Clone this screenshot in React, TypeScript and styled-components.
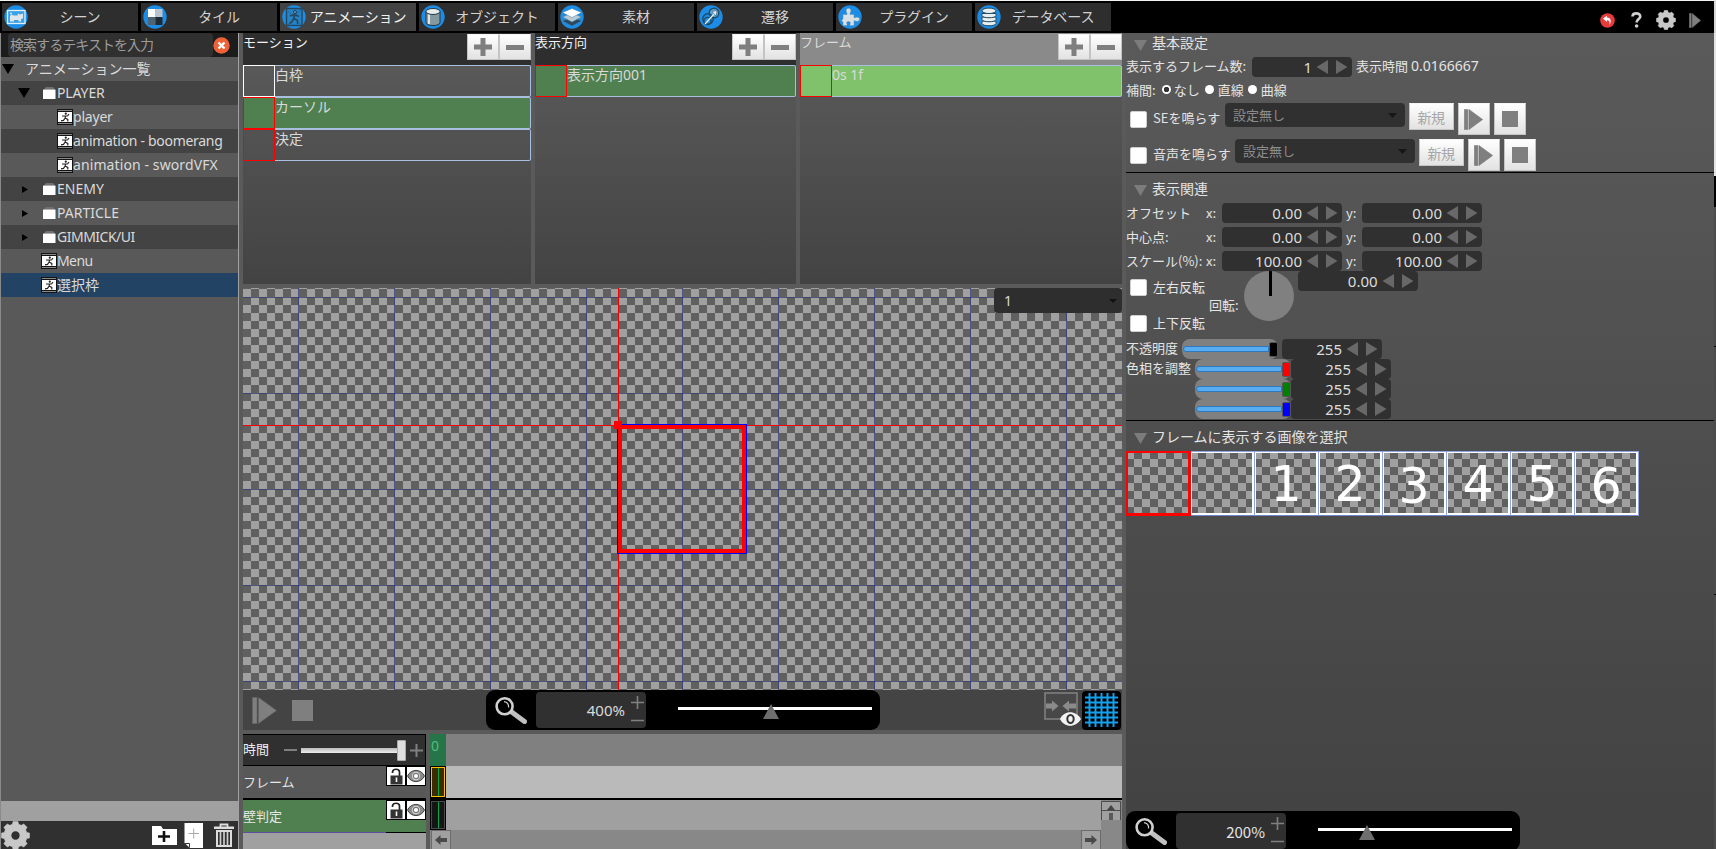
import React from "react";
import styled, { createGlobalStyle, css } from "styled-components";

const LATIN_JP = `"Noto Sans", "Noto Sans CJK JP", sans-serif`;
const JP = `"Noto Sans CJK JP", "Noto Sans", sans-serif`;

const Global = createGlobalStyle`
  *, *::before, *::after { box-sizing: border-box; }
  html, body { margin: 0; padding: 0; background: #5a5a5a; }
  body { overflow: hidden; font-family: ${LATIN_JP}; font-size: 14px; color: #dadada; }
  svg { display: block; flex: none; }
`;

const checker = css`
  background-color: #606060;
  background-image: conic-gradient(#606060 25%, #a0a0a0 0 50%, #606060 0 75%, #a0a0a0 0);
  background-size: 16px 16px;
`;

const Window = styled.div`
  width: 1716px;
  height: 849px;
  display: flex;
  flex-direction: column;
  overflow: hidden;
`;

/* ---------- top tab bar ---------- */

const TopBar = styled.header`
  height: 33px;
  flex: none;
  display: flex;
  justify-content: space-between;
  background: #000;
  border-top: 1px solid #f2f4f2;
  border-right: 2px solid #d8d8d8;
  padding: 2px 13px 2px 2px;
`;

const Tabs = styled.nav`
  display: flex;
  gap: 3px;
  height: 28px;
`;

const Tab = styled.div<{ $active?: boolean }>`
  position: relative;
  width: 136px;
  height: 28px;
  padding-left: 20px;
  padding-bottom: 2px;
  display: flex;
  align-items: center;
  justify-content: center;
  background: ${(p) => (p.$active ? "#434343" : "#2e2e2e")};
  color: ${(p) => (p.$active ? "#f0f0f0" : "#d2d2d2")};
  font: 14px/26px ${JP};
  letter-spacing: -0.12px;
  white-space: nowrap;
`;

const TabIcon = styled.svg`
  position: absolute;
  left: 2px;
  top: 2px;
`;

const TopTools = styled.div`
  display: flex;
  align-items: center;
  padding-top: 6px;
  height: 28px;
`;

const ToolSlot = styled.div<{ $ml?: number }>`
  margin-left: ${(p) => p.$ml ?? 0}px;
`;

const Main = styled.div`
  flex: 1;
  display: flex;
  min-height: 0;
`;

/* ---------- left panel ---------- */

const Left = styled.aside`
  width: 239px;
  margin-right: 4px;
  flex: none;
  display: flex;
  flex-direction: column;
  border-left: 1px solid #8a8a8a;
  border-right: 1px solid #a2a2a2;
  background: #595959;
`;

const SearchBar = styled.div`
  height: 24px;
  flex: none;
  display: flex;
  align-items: center;
  background: #1c1c1c;
  padding-left: 7px;
`;

const SearchInput = styled.div`
  width: 205px;
  height: 24px;
  border-radius: 4px;
  background: #303030;
  color: #9c9c9c;
  padding-left: 2px;
  font: 14px/22px ${JP};
  letter-spacing: -0.95px;
  white-space: nowrap;
`;

const TreeRow = styled.div<{ $alt?: boolean; $selected?: boolean; $indent: number }>`
  height: 24px;
  flex: none;
  display: flex;
  align-items: center;
  padding-left: ${(p) => p.$indent}px;
  background: ${(p) => (p.$selected ? "#234365" : p.$alt ? "#434343" : "#595959")};
  font-size: 14px;
  line-height: 24px;
  white-space: nowrap;
`;

const CaretSlot = styled.div<{ $w: number }>`
  width: ${(p) => p.$w}px;
  flex: none;
`;

const TreeLabel = styled.span<{ $ls?: number }>`
  letter-spacing: ${(p) => p.$ls ?? 0}px;
  height: 24px;
`;

const Fill = styled.div`
  flex: 1;
`;

const LightStrip = styled.div`
  height: 20px;
  background: #a0a0a0;
`;

const LeftTools = styled.div`
  height: 28px;
  background: #303030;
  display: flex;
  align-items: center;
  overflow: hidden;
`;

/* ---------- centre ---------- */

const Center = styled.main`
  width: 879px;
  margin-right: 4px;
  flex: none;
  display: flex;
  flex-direction: column;
`;

const Lists = styled.div`
  height: 251px;
  margin-bottom: 4px;
  flex: none;
  display: flex;
  gap: 4px;
`;

const ListPanel = styled.section<{ $w: number }>`
  width: ${(p) => p.$w}px;
  flex: none;
  background: linear-gradient(#5c5c5c, #434343);
`;

const ListHead = styled.div<{ $light?: boolean }>`
  height: 32px;
  display: flex;
  justify-content: space-between;
  background: ${(p) => (p.$light ? "#8a8a8a" : "#2e2e2e")};
  font: 13px/17px ${JP};
  color: ${(p) => (p.$light ? "#dcdcdc" : "#f2f2f2")};
`;

const ListButtons = styled.div`
  display: flex;
  padding-top: 1px;
`;

const WhiteButton = styled.div<{ $w: number; $h: number; $ml?: number }>`
  width: ${(p) => p.$w}px;
  height: ${(p) => p.$h}px;
  margin-left: ${(p) => p.$ml ?? 0}px;
  flex: none;
  display: flex;
  align-items: center;
  justify-content: center;
  background: linear-gradient(#ffffff, #e2e2e2);
  border: 1px solid #c4c4c4;
  border-top-color: #f4f4f4;
  color: #a6a6a6;
  font: 14px/24px ${JP};
  letter-spacing: -0.5px;
  padding-right: 1px;
`;

const ListItem = styled.div<{ $bg?: string }>`
  height: 32px;
  display: flex;
  border: 1px solid #a9bfe0;
  border-left: 0;
  border-radius: 2px;
  background: ${(p) => p.$bg ?? "transparent"};
  line-height: 17px;
  white-space: nowrap;
`;

const ItemThumb = styled.div<{ $c: string }>`
  width: 32px;
  height: 32px;
  margin: -1px 0 0 0;
  flex: none;
  border: 1px solid ${(p) => p.$c};
`;

const Stage = styled.div`
  position: relative;
  height: 402px;
  flex: none;
  overflow: hidden;
  ${checker}
  background-position: 0 1px;
`;

const StageGrid = styled.div`
  position: absolute;
  inset: 0;
  background-image:
    linear-gradient(90deg, rgba(45, 55, 125, 0.68) 1px, transparent 1px),
    linear-gradient(rgba(45, 55, 110, 0.68) 1px, transparent 1px);
  background-size: 96px 96px;
  background-position: 55px 9px;
`;

const AxisX = styled.div`
  position: absolute;
  left: 0;
  right: 0;
  top: 137px;
  height: 1px;
  background: #f80000;
`;

const AxisY = styled.div`
  position: absolute;
  top: 0;
  bottom: 0;
  left: 375px;
  width: 1px;
  background: #f80000;
`;

const Sprite = styled.div`
  position: absolute;
  left: 374px;
  top: 136px;
  width: 130px;
  height: 130px;
  border: 1px solid #0000ff;
  &::after {
    content: "";
    position: absolute;
    inset: 0;
    border: 4px solid #ff0000;
  }
`;

const Handle = styled.div`
  position: absolute;
  left: 371px;
  top: 133px;
  width: 8px;
  height: 8px;
  background: #ff0000;
`;

const StageSelect = styled.div`
  position: absolute;
  right: 0;
  top: 0;
  width: 128px;
  height: 25px;
  border-radius: 4px;
  background: #2e2e2e;
  display: flex;
  align-items: center;
  justify-content: space-between;
  padding: 0 5px 0 10px;
  line-height: 24px;
`;

const StageTools = styled.div`
  height: 40px;
  margin-bottom: 4px;
  flex: none;
  display: flex;
  align-items: center;
  background: #444;
`;

const Zoom = styled.div`
  width: 394px;
  height: 40px;
  flex: none;
  display: flex;
  align-items: center;
  border-radius: 9px;
  background: #000;
  padding-left: 9px;
`;

const ZoomField = styled.div`
  width: 110px;
  height: 36px;
  margin-left: 9px;
  border-radius: 4px;
  background: #303030;
  display: flex;
  align-items: center;
  justify-content: flex-end;
  padding: 1px 2px 0 0;
  font-size: 15px;
  line-height: 35px;
`;

const GridButton = styled.div`
  width: 39px;
  height: 39px;
  margin-left: 1px;
  border-radius: 4px;
  background: #000;
  display: flex;
  align-items: center;
  justify-content: center;
`;

const Timeline = styled.div`
  flex: 1;
  display: flex;
  gap: 4px;
  min-height: 0;
  overflow: hidden;
`;

const TrackNames = styled.div`
  width: 183px;
  flex: none;
  background: #a0a0a0;
`;

const TimeScale = styled.div`
  height: 32px;
  display: flex;
  align-items: center;
  border: 1px solid #000;
  border-left-width: 0;
  background: #303030;
  font: 13px/28px ${JP};
  color: #eee;
`;

const TimeLabel = styled.span`
  padding-bottom: 2px;
`;

const TimeSlider = styled.div`
  position: relative;
  width: 105px;
  height: 5px;
  margin: 0 4px 0 4px;
  background: linear-gradient(#bbb, #eee);
  &::after {
    content: "";
    position: absolute;
    right: 0;
    top: -8px;
    width: 9px;
    height: 21px;
    border-radius: 1px;
    border: 1px solid #aaa;
    background: #dedede;
  }
`;

const TrackName = styled.div<{ $bg: string }>`
  height: 32px;
  display: flex;
  justify-content: space-between;
  background: ${(p) => p.$bg};
  font: 13px/31px ${JP};
  color: #e6e6e6;
  white-space: nowrap;
`;

const TrackUnderline = styled.div`
  height: 1px;
  background: linear-gradient(90deg, #5b4f9e 143px, #000 0);
`;

const TrackToggles = styled.div`
  display: flex;
  height: 20px;
`;

const Toggle = styled.div`
  width: 20px;
  height: 20px;
  border: 1px solid #000;
  background: #fff;
  display: flex;
  align-items: center;
  justify-content: center;
`;

const Tracks = styled.div`
  flex: 1;
  display: flex;
  flex-direction: column;
  background: #888;
`;

const Track = styled.div<{ $bg: string; $h: number }>`
  height: ${(p) => p.$h}px;
  flex: none;
  display: flex;
  justify-content: space-between;
  background: ${(p) => p.$bg};
`;

const TimeZero = styled.div`
  width: 16px;
  height: 32px;
  background: #267548;
  color: #55bb80;
  padding-left: 1px;
  font-size: 14px;
  line-height: 24px;
`;

const Cell = styled.div<{ $c: string; $bg: string }>`
  width: 16px;
  height: 100%;
  border: 1px solid #000;
  background: linear-gradient(#00a850, #00a850) center / 1px 100% no-repeat content-box #000;
  box-shadow: inset 0 0 0 1px ${(p) => p.$c};
  background-color: ${(p) => p.$bg};
`;

const BlackLine = styled.div`
  height: 2px;
  flex: none;
  background: #000;
`;

const ScrollRow = styled.div`
  height: 19px;
  flex: none;
  display: flex;
  justify-content: space-between;
  padding: 0 21px 0 1px;
`;

const ScrollButton = styled.div`
  width: 20px;
  height: 20px;
  border: 1px solid #6c6c6c;
  background: #a0a0a0;
  display: flex;
  align-items: center;
  justify-content: center;
`;

const ScrollColumn = styled.div`
  width: 21px;
  background: #888;
  padding-top: 1px;
`;

/* ---------- right panel ---------- */

const Right = styled.section`
  width: 588px;
  flex: none;
  display: flex;
  flex-direction: column;
  background: linear-gradient(#5a5a5a, #424242);
  font: 13px/20px ${JP};
  color: #e4e4e4;
  white-space: nowrap;
`;

const Edge = styled.div`
  width: 2px;
  background: linear-gradient(
    #e4e4e4 143px, #000 143px 174px, #4c4c4c 174px 313px, #000 313px 314px,
    #4c4c4c 314px 561px, #000 561px 562px, #4c4c4c 562px
  );
`;

const Row = styled.div<{ $h: number }>`
  height: ${(p) => p.$h}px;
  flex: none;
  display: flex;
  align-items: center;
`;

const SectionHead = styled(Row)<{ $pt?: number }>`
  padding-left: 8px;
  padding-top: ${(p) => p.$pt ?? 0}px;
  gap: 5px;
  font-size: 14px;
`;

const SectionTitle = styled.span<{ $pb?: number }>`
  line-height: 18px;
  padding-bottom: ${(p) => p.$pb ?? 6}px;
`;

const Divider = styled.div<{ $mt?: number }>`
  height: 1px;
  margin-top: ${(p) => p.$mt ?? 0}px;
  flex: none;
  background: #000;
`;

const Label = styled.span<{ $w?: number; $ml?: number; $mt?: number; $pb?: number }>`
  ${(p) => p.$w !== undefined && `width: ${p.$w}px;`}
  margin-left: ${(p) => p.$ml ?? 0}px;
  margin-top: ${(p) => p.$mt ?? 0}px;
  padding-bottom: ${(p) => p.$pb ?? 0}px;
  flex: none;
`;

const Digits = styled.span`
  font-family: "Noto Sans", sans-serif;
  font-size: 14px;
`;

const Radio = styled.i<{ $on?: boolean; $ml: number }>`
  width: 9px;
  height: 9px;
  margin: 0 0 2px ${(p) => p.$ml}px;
  border-radius: 50%;
  flex: none;
  background: ${(p) => (p.$on ? "radial-gradient(#333 0 2.4px, #fff 3px)" : "#fff")};
`;

const Check = styled.i<{ $mt?: number }>`
  width: 17px;
  height: 17px;
  margin: ${(p) => p.$mt ?? 0}px 6px 0 4px;
  border: 1px solid #cfcfcf;
  border-radius: 2px;
  background: #fff;
  flex: none;
`;

const NumBox = styled.div<{ $w: number; $ml?: number }>`
  width: ${(p) => p.$w}px;
  height: 20px;
  margin-left: ${(p) => p.$ml ?? 0}px;
  flex: none;
  display: flex;
  align-items: center;
  justify-content: flex-end;
  gap: 4px;
  padding-right: 4px;
  border-radius: 4px;
  background: #303030;
  color: #dcdcdc;
  font: 15px/22px "Noto Sans", sans-serif;
`;

const Select = styled.div`
  width: 180px;
  height: 24px;
  flex: none;
  display: flex;
  align-items: center;
  justify-content: space-between;
  padding: 0 8px;
  border-radius: 4px;
  background: #303030;
  color: #8c8c8c;
  line-height: 24px;
`;

const SoundRow = styled.div<{ $h: number }>`
  height: ${(p) => p.$h}px;
  flex: none;
  display: flex;
  align-items: flex-start;
`;

const PairGrid = styled.div`
  display: grid;
  grid-auto-rows: 20px;
  row-gap: 4px;
  flex: none;
`;

const RotationRow = styled.div`
  height: 68px;
  flex: none;
  display: flex;
  align-items: flex-start;
`;

const FlipColumn = styled.div`
  width: 83px;
  display: flex;
  flex-direction: column;
  gap: 19px;
  padding-top: 8px;
`;

const FlipOption = styled.div`
  height: 17px;
  display: flex;
  align-items: center;
`;

const Dial = styled.div`
  width: 50px;
  height: 50px;
  border-radius: 50%;
  margin: 0 4px 0 5px;
  flex: none;
  background: linear-gradient(#000, #000) 25px 0 / 3px 25px no-repeat #808080;
`;

const SliderBox = styled.div<{ $thumb: string; $ml: number }>`
  width: 96px;
  height: 20px;
  margin-left: ${(p) => p.$ml}px;
  flex: none;
  border-radius: 8px;
  background: #808080;
  display: flex;
  align-items: center;
  padding-left: 1px;
  &::before {
    content: "";
    width: 86px;
    height: 6px;
    border: 1px solid #2f78bc;
    border-radius: 3px 0 0 3px;
    background: #58acf2;
  }
  &::after {
    content: "";
    width: 9px;
    height: 15px;
    border: 1px solid #555;
    border-radius: 2px;
    background: ${(p) => p.$thumb};
  }
`;

const Images = styled.div`
  display: flex;
  margin-bottom: auto;
  height: 65px;
  width: 513px;
  border-right: 1px solid #90a4e0;
`;

const ImageCell = styled.div<{ $shift?: number; $selected?: boolean }>`
  position: relative;
  width: 64px;
  height: 65px;
  flex: none;
  ${checker}
  border-left: 1px solid #90a4e0;
  border-top: 1px solid #90a4e0;
  border-bottom: 1px solid #6f84c8;
  background-origin: border-box;
  box-shadow: inset 1px 1px 0 #fff, inset -2px -2px 0 #fff;
  text-align: center;
  color: #fff;
  font: 49px/54px "DejaVu Sans", sans-serif;
  padding: ${(p) => 6 + (p.$shift ?? 0)}px 1px 0 0;
  ${(p) =>
    p.$selected &&
    css`
      &::after {
        content: "";
        position: absolute;
        z-index: 1;
        left: -1px;
        top: -1px;
        width: 65px;
        height: 65px;
        border: 2px solid #ff0000;
        border-right-width: 3px;
        border-bottom-width: 3px;
      }
    `}
`;

const TrackSlot = styled.div`
  margin-left: 32px;
`;

const BottomZoom = styled.div`
  height: 38px;
  flex: none;
  overflow: hidden;
`;

/* ---------- icons ---------- */

const CaretDown = ({ w, h, c }: { w: number; h: number; c: string }) => (
  <svg width={w} height={h} viewBox="0 0 10 10" preserveAspectRatio="none">
    <path d="M0 0H10L5 10Z" fill={c} />
  </svg>
);

const CaretRight = () => (
  <svg width="6" height="7" viewBox="0 0 6 7">
    <path d="M0 0L6 3.5L0 7Z" fill="#000" />
  </svg>
);

const FolderIcon = () => (
  <svg width="14" height="12" viewBox="0 0 14 12">
    <path d="M3 0H10L12 2.5H1Z" fill="#707070" />
    <rect y="2.5" width="12.5" height="9.5" rx="0.5" fill="#fff" />
  </svg>
);

const FilmIcon = () => (
  <svg width="16" height="16" viewBox="0 0 16 16">
    <rect width="16" height="16" fill="#141414" />
    <rect x="1" y="3" width="14" height="10" fill="#fff" />
    <path d="M1.5 1.5H15M1.5 14.5H15" stroke="#fff" strokeWidth="1" strokeDasharray="1 1" />
    <circle cx="8.8" cy="4.7" r="1.1" fill="#222" />
    <path d="M5 7H10.5L12 5M8.3 6.5V9.2L10.8 10.4V12.4M8.2 9L6.5 11.4L4 11.9" stroke="#222" strokeWidth="1.2" fill="none" />
  </svg>
);

const Plus = ({ size = 18, w = 5, c = "#7f7f7f" }: { size?: number; w?: number; c?: string }) => (
  <svg width={size} height={size} viewBox={`0 0 ${size} ${size}`}>
    <path d={`M0 ${size / 2}H${size}M${size / 2} 0V${size}`} stroke={c} strokeWidth={w} />
  </svg>
);

const Minus = ({ size = 18, w = 5, c = "#7f7f7f" }: { size?: number; w?: number; c?: string }) => (
  <svg width={size} height={w} viewBox={`0 0 ${size} ${w}`}>
    <rect width={size} height={w} fill={c} />
  </svg>
);

const PlayIcon = ({ w, h, c = "#7f7f7f" }: { w: number; h: number; c?: string }) => (
  <svg width={w} height={h} viewBox="0 0 25 27" preserveAspectRatio="none">
    <path d="M0.5 0.5H5V26.5H0.5ZM6.5 0.5L24.5 13.5L6.5 26.5Z" fill={c} stroke="#666" strokeWidth="0.6" />
  </svg>
);

const StopIcon = ({ size }: { size: number }) => (
  <svg width={size} height={size}>
    <rect width={size} height={size} fill="#7f7f7f" />
  </svg>
);

const SpinArrows = () => (
  <svg width="32" height="14" viewBox="0 0 32 14">
    <path d="M12 0V14L0.5 7ZM20 0V14L31.5 7Z" fill="#686868" />
  </svg>
);

const gearPath = (cx: number, cy: number, r: number) => {
  const pts: string[] = [];
  for (let i = 0; i < 8; i++) {
    [-0.27, -0.17, 0.17, 0.27].forEach((o, k) => {
      const a = (i * Math.PI) / 4 + o;
      const q = k === 0 || k === 3 ? r * 0.82 : r;
      pts.push(`${(cx + q * Math.cos(a)).toFixed(2)} ${(cy + q * Math.sin(a)).toFixed(2)}`);
    });
  }
  return `M${pts.join("L")}Z`;
};

const Gear = ({ size, hole }: { size: number; hole: string }) => (
  <svg width={size} height={size} viewBox="0 0 30 30">
    <path d={gearPath(15, 15, 14.7)} fill="#c8c8c8" stroke="#c8c8c8" strokeWidth="0.6" strokeLinejoin="round" />
    <circle cx="15" cy="15" r="4.3" fill={hole} />
  </svg>
);

const Magnifier = () => (
  <svg width="32" height="27" viewBox="0 0 32 27">
    <path d="M16 14.5L29.5 24.5" stroke="#c0c0c0" strokeWidth="5" strokeLinecap="round" />
    <circle cx="9.6" cy="9.3" r="8" stroke="#d0d0d0" strokeWidth="2.6" fill="#000" />
    <path d="M9 4.6C12 5 13.8 7 13.6 10.5" stroke="#d0d0d0" strokeWidth="1.2" fill="none" />
  </svg>
);

const TabGlyph = ({ kind }: { kind: string }) => (
  <TabIcon width="24" height="24" viewBox="0 0 24 24">
    <circle cx="12" cy="12" r="11.7" fill="#1c8de6" />
    {kind === "scene" && (
      <g>
        <rect x="3.5" y="5.5" width="17.5" height="13" fill="#3aa0e8" stroke="#dff0f8" strokeWidth="1.3" />
        <path d="M6 16.5V11L7.5 9.500L9.500 10.500H13.500L14 8.500L16 9.500L19 8.500V13L17 14.500V16.500H14.500V15H10V16.500Z" fill="#dce6e8" />
        <circle cx="7" cy="8.500" r="1" fill="#dce6e8" />
      </g>
    )}
    {kind === "tile" && (
      <g>
        <rect x="5" y="4" width="7.5" height="8" fill="#fff" />
        <rect x="12.5" y="4" width="7" height="8" fill="#b9c4cc" />
        <rect x="5" y="12" width="7.5" height="8" fill="#4d6474" />
        <rect x="12.5" y="12" width="7" height="8" fill="#1e2b34" />
      </g>
    )}
    {kind === "anim" && (
      <g fill="none" stroke="#27475e">
        <rect x="4.5" y="3.5" width="15.5" height="17" fill="#2583c8" strokeWidth="1.4" />
        <path d="M6 20L19 4M6 6L18 19" strokeWidth="0.5" />
        <circle cx="13" cy="7" r="1.6" fill="#5f8ba5" />
        <path d="M8 11L12.5 9.5L17 11.5M12.5 9.5L12 13.5L15.5 15.5V19M12 13.5L9.5 17.5L7.5 18.5" strokeWidth="1.5" />
      </g>
    )}
    {kind === "object" && (
      <g stroke="#27353d" strokeWidth="1">
        <path d="M5 6.5V17.5C5 21.5 19 21.5 19 17.5V6.5Z" fill="#86999f" />
        <path d="M8 9V19" stroke="#dde6e8" strokeWidth="2" />
        <ellipse cx="12" cy="6.5" rx="7" ry="3" fill="#e4ecec" />
      </g>
    )}
    {kind === "asset" && (
      <g stroke="#4b7f9f" strokeWidth="0.5">
        <path d="M2.5 16L12 12L21.5 16L12 21Z" fill="#284960" />
        <path d="M2.5 12L12 8L21.5 12L12 17Z" fill="#b8cbd4" />
        <path d="M2.5 7.5L12 3.5L21.5 7.5L12 12.5Z" fill="#fff" />
      </g>
    )}
    {kind === "link" && (
      <g fill="none" stroke="#1f4a66" strokeWidth="1.4">
        <circle cx="15" cy="8" r="4.8" fill="#5fa6d6" />
        <circle cx="9" cy="14" r="5.2" />
        <circle cx="8.5" cy="16" r="3.6" />
        <path d="M6 19L16 8" stroke="#e0edf2" strokeWidth="1.3" />
        <path d="M13 6.5L18 5.5L17 11Z" fill="#e8f0f2" strokeWidth="0.5" />
      </g>
    )}
    {kind === "plugin" && (
      <path
        d="M5 9.5H9V8.2C7.5 6.5 8 3.3 10.5 3.3S13.5 6.5 12 8.2V9.5H16V13C17.5 12 21.5 11.5 21.5 14.3S17.5 16.5 16 15.5V20.5H12V19C13 17.5 12 16.5 10.5 16.5S8 17.5 9 19V20.5H5V17L3.5 15.5L5 14Z"
        fill="#d7e0e4"
        stroke="#6c8ea3"
        strokeWidth="0.5"
      />
    )}
    {kind === "db" && (
      <g fill="#e9eff0" stroke="#24475c" strokeWidth="1">
        <path d="M5 16V18.5C5 21.5 19 21.5 19 18.5V16Z" />
        <path d="M5 12V14.5C5 17.5 19 17.5 19 14.5V12Z" />
        <path d="M5 8.5V10.5C5 13.5 19 13.5 19 10.5V8.5Z" />
        <ellipse cx="12" cy="5.8" rx="7" ry="2.7" />
      </g>
    )}
  </TabIcon>
);

const LockIcon = () => (
  <svg width="13" height="17" viewBox="0 0 13 17">
    <path d="M2.5 5V4C2.5 0.3 9.5 0.3 9.5 4V8" stroke="#222" strokeWidth="1.7" fill="none" />
    <rect x="0.5" y="7.5" width="12" height="9" fill="#333" />
    <path d="M6.5 9.5V14" stroke="#fff" strokeWidth="1.6" />
  </svg>
);

const EyeIcon = () => (
  <svg width="18" height="14" viewBox="0 0 18 14">
    <path d="M0.5 7C4 -0.5 14 -0.5 17.5 7C14 14.5 4 14.5 0.5 7Z" fill="#8a8a8a" stroke="#444" />
    <circle cx="9" cy="7" r="4.2" fill="#ddd" />
    <circle cx="9" cy="7" r="2.7" fill="#fff" stroke="#777" strokeWidth="1.2" />
  </svg>
);

const Arrow = ({ turn = 0 }: { turn?: number }) => (
  <svg width="12" height="10" viewBox="0 0 12 10">
    <path d="M0 5L5.5 0V3H12V7H5.5V10Z" fill="#4a4a4a" transform={`rotate(${turn} 6 5)`} />
  </svg>
);

const ScrollUp = () => (
  <svg width="20" height="19" viewBox="0 0 20 19">
    <path d="M0.5 19V0.5H19.5V19" fill="#a0a0a0" stroke="#4c4c4c" />
    <path d="M0 9.5H20" stroke="#4c4c4c" />
    <path d="M10 4L14 9H6Z" fill="#444" />
    <rect x="8" y="12" width="4" height="7" fill="#5a5a5a" />
  </svg>
);

const SnapIcon = () => (
  <svg width="37" height="36" viewBox="0 0 37 36">
    <rect x="1" y="1" width="32" height="26" fill="#484848" stroke="#7f7f7f" strokeWidth="1.6" />
    <path d="M2 11.5H8V8.5L14.5 14L8 19.5V16.5H2ZM32 11.5H25V8.5L18.5 14L25 19.5V16.5H32Z" fill="#8a8a8a" />
    <path d="M16 27C20 18 32 18 37 27C32 36 20 36 16 27Z" fill="#f2f2f2" />
    <ellipse cx="26.5" cy="27" rx="3.2" ry="4" fill="none" stroke="#333" strokeWidth="2" />
  </svg>
);

const GridIcon = () => (
  <svg width="33" height="34" viewBox="0 0 33 34">
    <path
      d="M4.5 0V34M10.5 0V34M16.5 0V34M22.5 0V34M28.5 0V34M0 4.5H33M0 9.5H33M0 14.5H33M0 19.5H33M0 24.5H33M0 29.5H33"
      stroke="#14a0ec"
      strokeWidth="2"
    />
  </svg>
);

const FolderAdd = () => (
  <svg width="25" height="20" viewBox="0 0 25 20">
    <path d="M0 1H9L11 4H25V20H0Z" fill="#fff" />
    <path d="M6 11.5H18M12 6V17" stroke="#111" strokeWidth="2.6" />
  </svg>
);

const FileAdd = () => (
  <svg width="19" height="25" viewBox="0 0 19 25">
    <path d="M0.5 0H19V25H6L0.5 20Z" fill="#fff" />
    <path d="M1 20.5H5.5V24.5" stroke="#333" fill="none" />
    <path d="M4.5 10.5H15M9.7 5.5V15.5" stroke="#aaa" />
  </svg>
);

const Trash = () => (
  <svg width="20" height="24" viewBox="0 0 20 24">
    <path d="M6.5 4V1.5H13.5V4" stroke="#ddd" strokeWidth="1.8" fill="none" />
    <rect y="3.5" width="20" height="2.5" fill="#ddd" />
    <rect x="3" y="8" width="14" height="15" fill="none" stroke="#ddd" strokeWidth="2" />
    <path d="M6.5 9V22M10 9V22M13.5 9V22" stroke="#ccc" strokeWidth="1.7" />
  </svg>
);

const ClearIcon = () => (
  <svg width="17" height="17" viewBox="0 0 17 17">
    <circle cx="8.5" cy="8.5" r="8.2" fill="#ee6238" />
    <path d="M5.5 5.5L11.5 11.5M11.5 5.5L5.5 11.5" stroke="#fff" strokeWidth="2.4" />
  </svg>
);

const UndoIcon = () => (
  <svg width="15" height="15" viewBox="0 0 15 15">
    <circle cx="7.5" cy="7.5" r="7.3" fill="#e63c3c" />
    <path d="M3 5.5L7 2.8V4.6C10.5 4.6 12 8 9.5 12C10 8.5 9 7.5 7 7.3V9Z" fill="#fff" />
  </svg>
);

const HelpIcon = () => (
  <svg width="11" height="16" viewBox="0 0 11 16">
    <path d="M1.5 4.5C1.5 0.3 9.3 0.3 9.3 4.5C9.3 7 5.6 7.2 5.6 10.5" stroke="#d0d0d0" strokeWidth="2.6" fill="none" />
    <circle cx="5.6" cy="14" r="1.8" fill="#d0d0d0" />
  </svg>
);

const ZoomTrack = ({ at }: { at: number }) => (
  <svg width="196" height="20" viewBox="0 0 196 20">
    <rect x="0" y="7" width="194" height="3" fill="#fff" />
    <path d={`M${at - 8} 19L${at} 4L${at + 8} 19Z`} fill="#6e6e6e" />
  </svg>
);

const Stepper = () => (
  <svg width="14" height="30" viewBox="0 0 14 30">
    <path d="M1 6.5H14M7.5 0V13M1 24.5H14" stroke="#808080" strokeWidth="1.6" />
  </svg>
);

const ZoomControl = ({ value, at }: { value: string; at: number }) => (
  <Zoom>
    <Magnifier />
    <ZoomField>
      <span>{value}</span>
      <ToolSlot $ml={5}>
        <Stepper />
      </ToolSlot>
    </ZoomField>
    <TrackSlot>
      <ZoomTrack at={at} />
    </TrackSlot>
  </Zoom>
);

const Num = ({ w, ml, value }: { w: number; ml?: number; value: string }) => (
  <NumBox $w={w} $ml={ml}>
    {value}
    <SpinArrows />
  </NumBox>
);

/* ---------- data ---------- */

const tabs = [
  ["scene", "シーン"],
  ["tile", "タイル"],
  ["anim", "アニメーション"],
  ["object", "オブジェクト"],
  ["asset", "素材"],
  ["link", "遷移"],
  ["plugin", "プラグイン"],
  ["db", "データベース"],
];

type Node = { label: string; kind: "open" | "closed" | "leaf" | "top"; ls?: number; selected?: boolean };

const tree: Node[] = [
  { label: "PLAYER", kind: "open", ls: -0.1 },
  { label: "player", kind: "leaf", ls: -0.2 },
  { label: "animation - boomerang", kind: "leaf", ls: -0.3 },
  { label: "animation - swordVFX", kind: "leaf", ls: 0.1 },
  { label: "ENEMY", kind: "closed" },
  { label: "PARTICLE", kind: "closed" },
  { label: "GIMMICK/UI", kind: "closed", ls: -0.5 },
  { label: "Menu", kind: "top", ls: -0.6 },
  { label: "選択枠", kind: "top", selected: true },
];

const indentOf = { open: 17, closed: 21, leaf: 56, top: 40 };

const ListTitle = ({ title, light }: { title: string; light?: boolean }) => (
  <ListHead $light={light}>
    <span>{title}</span>
    <ListButtons>
      <WhiteButton $w={32} $h={26}>
        <Plus />
      </WhiteButton>
      <WhiteButton $w={32} $h={26}>
        <Minus />
      </WhiteButton>
    </ListButtons>
  </ListHead>
);

const TrackSwitches = () => (
  <TrackToggles>
    <Toggle>
      <LockIcon />
    </Toggle>
    <Toggle>
      <EyeIcon />
    </Toggle>
  </TrackToggles>
);

const Sound = ({ label, w, h }: { label: string; w: number; h: number }) => (
  <SoundRow $h={h}>
    <Check $mt={8} />
    <Label $w={w} $mt={5}>
      {label}
    </Label>
    <Select>
      設定無し
      <CaretDown w={9} h={5} c="#161616" />
    </Select>
    <WhiteButton $w={45} $h={27} $ml={4}>
      新規
    </WhiteButton>
    <WhiteButton $w={32} $h={32} $ml={4}>
      <PlayIcon w={19} h={21} />
    </WhiteButton>
    <WhiteButton $w={32} $h={32} $ml={4}>
      <StopIcon size={16} />
    </WhiteButton>
  </SoundRow>
);

const Pair = ({ label, value }: { label: string; value: string }) => (
  <Row $h={20}>
    <Label $w={80} $pb={1}>
      {label}
    </Label>
    <Label $w={16}>x:</Label>
    <Num w={120} value={value} />
    <Label $w={16} $ml={4}>
      y:
    </Label>
    <Num w={120} value={value} />
  </Row>
);

export default function App() {
  return (
    <Window>
      <Global />
      <TopBar>
        <Tabs>
          {tabs.map(([kind, label]) => (
            <Tab key={kind} $active={kind === "anim"}>
              <TabGlyph kind={kind} />
              {label}
            </Tab>
          ))}
        </Tabs>
        <TopTools>
          <UndoIcon />
          <ToolSlot $ml={16}>
            <HelpIcon />
          </ToolSlot>
          <ToolSlot $ml={14}>
            <Gear size={20} hole="#000" />
          </ToolSlot>
          <ToolSlot $ml={13}>
            <PlayIcon w={12} h={15} />
          </ToolSlot>
        </TopTools>
      </TopBar>

      <Main>
        <Left>
          <SearchBar>
            <SearchInput>検索するテキストを入力</SearchInput>
            <ClearIcon />
          </SearchBar>
          <TreeRow $indent={1}>
            <CaretSlot $w={23}>
              <CaretDown w={12} h={10} c="#000" />
            </CaretSlot>
            <TreeLabel>アニメーション一覧</TreeLabel>
          </TreeRow>
          {tree.map((n, i) => (
            <TreeRow key={n.label} $alt={i % 2 === 0} $selected={n.selected} $indent={indentOf[n.kind]}>
              {n.kind === "open" && (
                <CaretSlot $w={25}>
                  <CaretDown w={12} h={10} c="#000" />
                </CaretSlot>
              )}
              {n.kind === "closed" && (
                <CaretSlot $w={21}>
                  <CaretRight />
                </CaretSlot>
              )}
              {n.kind === "leaf" || n.kind === "top" ? <FilmIcon /> : <FolderIcon />}
              <TreeLabel $ls={n.ls}>{n.label}</TreeLabel>
            </TreeRow>
          ))}
          <Fill />
          <LightStrip />
          <LeftTools>
            <Gear size={29} hole="#303030" />
            <ToolSlot $ml={122}>
              <FolderAdd />
            </ToolSlot>
            <ToolSlot $ml={7}>
              <FileAdd />
            </ToolSlot>
            <ToolSlot $ml={11}>
              <Trash />
            </ToolSlot>
          </LeftTools>
        </Left>

        <Center>
          <Lists>
            <ListPanel $w={288}>
              <ListTitle title="モーション" />
              <ListItem>
                <ItemThumb $c="#fff" />
                白枠
              </ListItem>
              <ListItem $bg="#50804f">
                <ItemThumb $c="#f00" />
                カーソル
              </ListItem>
              <ListItem>
                <ItemThumb $c="#f00" />
                決定
              </ListItem>
            </ListPanel>
            <ListPanel $w={261}>
              <ListTitle title="表示方向" />
              <ListItem $bg="#50804f">
                <ItemThumb $c="#f00" />
                表示方向001
              </ListItem>
            </ListPanel>
            <ListPanel $w={322}>
              <ListTitle title="フレーム" light />
              <ListItem $bg="#80c26b">
                <ItemThumb $c="#f00" />
                0s 1f
              </ListItem>
            </ListPanel>
          </Lists>

          <Stage>
            <StageGrid />
            <AxisX />
            <AxisY />
            <Sprite />
            <Handle />
            <StageSelect>
              1
              <CaretDown w={8} h={4} c="#111" />
            </StageSelect>
          </Stage>

          <StageTools>
            <ToolSlot $ml={9}>
              <PlayIcon w={25} h={27} />
            </ToolSlot>
            <ToolSlot $ml={15}>
              <StopIcon size={21} />
            </ToolSlot>
            <ToolSlot $ml={173}>
              <ZoomControl value="400%" at={93} />
            </ToolSlot>
            <ToolSlot $ml={164}>
              <SnapIcon />
            </ToolSlot>
            <GridButton>
              <GridIcon />
            </GridButton>
          </StageTools>

          <Timeline>
            <TrackNames>
              <TimeScale>
                <TimeLabel>時間</TimeLabel>
                <ToolSlot $ml={15}>
                  <Minus size={13} w={2} />
                </ToolSlot>
                <TimeSlider />
                <Plus size={13} w={2} />
              </TimeScale>
              <TrackName $bg="#585858">
                フレーム
                <TrackSwitches />
              </TrackName>
              <BlackLine />
              <TrackName $bg="#50804f">
                壁判定
                <TrackSwitches />
              </TrackName>
              <TrackUnderline />
            </TrackNames>
            <Tracks>
              <Track $bg="#808080" $h={32}>
                <TimeZero>0</TimeZero>
              </Track>
              <Track $bg="#bababa" $h={32}>
                <Cell $c="#ffbf00" $bg="#3c2c00" />
              </Track>
              <BlackLine />
              <Track $bg="#a0a0a0" $h={30}>
                <Cell $c="#4a4a4a" $bg="#151515" />
                <ScrollColumn>
                  <ScrollUp />
                </ScrollColumn>
              </Track>
              <ScrollRow>
                <ScrollButton>
                  <Arrow />
                </ScrollButton>
                <ScrollButton>
                  <Arrow turn={180} />
                </ScrollButton>
              </ScrollRow>
            </Tracks>
          </Timeline>
        </Center>

        <Right>
          <SectionHead $h={24} $pt={1}>
            <CaretDown w={13} h={11} c="#7c7c7c" />
            <SectionTitle $pb={7}>基本設定</SectionTitle>
          </SectionHead>
          <Row $h={20}>
            <Label $w={126} $pb={2}>
              表示するフレーム数:
            </Label>
            <Num w={100} value="1" />
            <Label $ml={4} $pb={2}>
              表示時間 <Digits>0.0166667</Digits>
            </Label>
          </Row>
          <Row $h={26}>
            <Label $pb={1}>補間:</Label>
            <Radio $on $ml={6} />
            <Label $ml={3} $pb={1}>
              なし
            </Label>
            <Radio $ml={5} />
            <Label $ml={4} $pb={1}>
              直線
            </Label>
            <Radio $ml={4} />
            <Label $ml={4} $pb={1}>
              曲線
            </Label>
          </Row>
          <Sound label="SEを鳴らす" w={72} h={36} />
          <Sound label="音声を鳴らす" w={82} h={33} />
          <Divider />
          <SectionHead $h={30} $pt={5}>
            <CaretDown w={13} h={11} c="#7c7c7c" />
            <SectionTitle>表示関連</SectionTitle>
          </SectionHead>
          <PairGrid>
            <Pair label="オフセット" value="0.00" />
            <Pair label="中心点:" value="0.00" />
            <Pair label="スケール(%):" value="100.00" />
          </PairGrid>
          <RotationRow>
            <FlipColumn>
              <FlipOption>
                <Check />
                <Label $pb={2}>左右反転</Label>
              </FlipOption>
              <FlipOption>
                <Check />
                <Label $pb={2}>上下反転</Label>
              </FlipOption>
            </FlipColumn>
            <Label $mt={24}>回転:</Label>
            <Dial />
            <Num w={120} value="0.00" />
          </RotationRow>
          <Row $h={20}>
            <Label $w={52} $pb={2}>
              不透明度
            </Label>
            <SliderBox $thumb="#000" $ml={4} />
            <Num w={100} ml={4} value="255" />
          </Row>
          <Row $h={20}>
            <Label $w={65} $pb={2}>
              色相を調整
            </Label>
            <SliderBox $thumb="#f00" $ml={4} />
            <Num w={100} value="255" />
          </Row>
          <Row $h={20}>
            <SliderBox $thumb="#008000" $ml={69} />
            <Num w={100} value="255" />
          </Row>
          <Row $h={20}>
            <SliderBox $thumb="#00f" $ml={69} />
            <Num w={100} value="255" />
          </Row>
          <Divider $mt={1} />
          <SectionHead $h={30} $pt={5}>
            <CaretDown w={13} h={11} c="#7c7c7c" />
            <SectionTitle>フレームに表示する画像を選択</SectionTitle>
          </SectionHead>
          <Images>
            <ImageCell $selected />
            <ImageCell />
            <ImageCell>1</ImageCell>
            <ImageCell>2</ImageCell>
            <ImageCell $shift={2}>3</ImageCell>
            <ImageCell>4</ImageCell>
            <ImageCell>5</ImageCell>
            <ImageCell $shift={2}>6</ImageCell>
          </Images>
          <BottomZoom>
            <ZoomControl value="200%" at={49} />
          </BottomZoom>
        </Right>
        <Edge />
      </Main>
    </Window>
  );
}
